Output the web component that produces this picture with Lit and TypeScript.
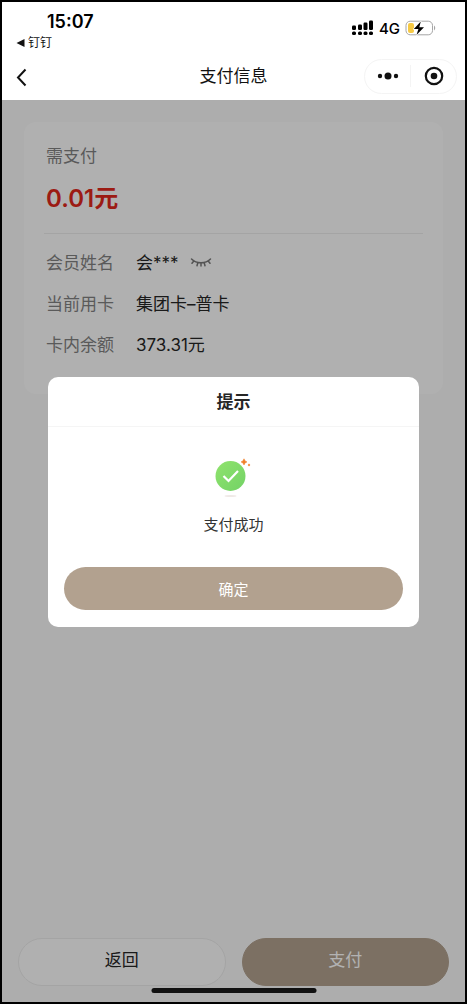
import { LitElement, html, css } from "lit";
import { customElement, property, state } from "lit/decorators.js";

const base = css`
  *,
  *::before,
  *::after {
    box-sizing: border-box;
  }
  button {
    margin: 0;
    padding: 0;
    border: 0;
    background: none;
    color: inherit;
    font: inherit;
    cursor: pointer;
  }
  svg {
    display: block;
  }
`;

@customElement("status-bar")
class StatusBar extends LitElement {
  static styles = [
    base,
    css`
      :host {
        display: flex;
        justify-content: space-between;
        height: 50px;
        padding: 8px 29px 0 14px;
      }
      .left {
        display: flex;
        flex-direction: column;
      }
      .time {
        padding-left: 31px;
        font-size: 18px;
        line-height: 24px;
        font-weight: 600;
      }
      .back {
        display: flex;
        align-items: center;
        gap: 3px;
        color: #111;
        font-size: 12px;
        line-height: 18px;
        text-decoration: none;
      }
      .right {
        display: flex;
        align-items: center;
        gap: 5px;
        height: 36px;
        font-size: 15px;
        font-weight: 500;
      }
    `,
  ];

  render() {
    return html`
      <div class="left">
        <div class="time">15:07</div>
        <a class="back" href="#">
          <svg width="9" height="8" viewBox="0 0 9 8"><path d="M8.5 0v8L.5 4z" fill="#111" /></svg>
          <span>钉钉</span>
        </a>
      </div>
      <div class="right">
        <svg width="23" height="16" viewBox="0 0 23 16" fill="#000">
          <rect x="1" y="5.5" width="4" height="4.5" rx="1.2" />
          <rect x="7" y="4.5" width="4" height="5.5" rx="1.2" />
          <rect x="12.5" y="2.5" width="4" height="7.5" rx="1.2" />
          <rect x="18" y=".5" width="4" height="9.5" rx="1.2" />
          <rect x="1" y="11.5" width="4" height="3.6" rx="1.5" />
          <rect x="7" y="11.5" width="4" height="3.6" rx="1.5" />
          <rect x="12.5" y="11.5" width="4" height="3.6" rx="1.5" />
          <rect x="18" y="11.5" width="4" height="3.6" rx="1.5" />
        </svg>
        <span>4G</span>
        <svg width="31" height="16" viewBox="0 0 31 16">
          <rect x="1" y="1.2" width="26.5" height="13.6" rx="4.2" fill="#fff" stroke="#a5a5a5" />
          <path d="M29 5.6c1.6.7 1.6 4.1 0 4.8z" fill="#a5a5a5" />
          <rect x="3" y="3" width="6" height="10" rx="2" fill="#f6c944" />
          <path
            d="M15.8 1.6 8.8 9h4.6l-1.9 6 7.5-7.8h-4.7z"
            fill="#000"
            stroke="#fff"
            stroke-width="1.4"
            paint-order="stroke"
            stroke-linejoin="round"
          />
        </svg>
      </div>
    `;
  }
}

@customElement("nav-bar")
class NavBar extends LitElement {
  @property() heading = "";

  static styles = [
    base,
    css`
      :host {
        display: grid;
        grid-template-columns: 1fr auto 1fr;
        align-items: center;
        height: 48px;
        padding: 0 8px;
      }
      .back {
        display: flex;
        align-items: center;
        width: 28px;
        height: 32px;
        padding: 2px 0 0 4px;
      }
      .title {
        margin: 0;
        font-size: 17px;
        line-height: 24px;
        font-weight: 400;
        color: #111;
      }
      .capsule {
        justify-self: end;
        display: flex;
        align-items: center;
        width: 93px;
        height: 35px;
        border: 1px solid #f4f4f4;
        border-radius: 18px;
      }
      .capsule button {
        flex: 1;
        display: flex;
        align-items: center;
        justify-content: center;
        height: 22px;
      }
      .capsule button + button {
        border-left: 1px solid #f4f4f4;
      }
    `,
  ];

  render() {
    return html`
      <button class="back" aria-label="返回上一页">
        <svg width="14" height="20" viewBox="0 0 14 20" fill="none">
          <path d="M11.5 2.500 4 10.500l7.500 8" stroke="#111" stroke-width="2" />
        </svg>
      </button>
      <h1 class="title">${this.heading}</h1>
      <div class="capsule">
        <button aria-label="更多">
          <svg width="22" height="10" viewBox="0 0 22 10" fill="#111">
            <circle cx="3" cy="5" r="2.2" />
            <circle cx="11" cy="5" r="3.5" />
            <circle cx="19" cy="5" r="2.2" />
          </svg>
        </button>
        <button aria-label="关闭">
          <svg width="20" height="20" viewBox="0 0 20 20" fill="none">
            <circle cx="10" cy="10" r="8.2" stroke="#111" stroke-width="2.2" />
            <circle cx="10" cy="10" r="3.3" fill="#111" />
          </svg>
        </button>
      </div>
    `;
  }
}

@customElement("payment-card")
class PaymentCard extends LitElement {
  static styles = [
    base,
    css`
      :host {
        display: block;
        padding: 22px 20px 29px;
        border-radius: 12px;
        background: #fdfdfd;
        font-size: 17px;
        line-height: 24px;
      }
      .label {
        color: #828282;
      }
      .due,
      .row {
        padding: 0 2px;
      }
      .amount {
        margin-top: 14px;
        font-size: 24px;
        line-height: 34px;
        font-weight: 600;
        color: #e0281c;
      }
      .details {
        margin: 17px 0 0;
        padding-top: 8px;
        border-top: 1px solid #ebebeb;
      }
      .row {
        display: flex;
        align-items: center;
        gap: 22px;
        height: 41px;
      }
      .value {
        display: flex;
        align-items: center;
        gap: 11px;
        margin: 0;
        color: #262626;
      }
    `,
  ];

  render() {
    return html`
      <div class="due">
        <div class="label">需支付</div>
        <div class="amount">0.01元</div>
      </div>
      <dl class="details">
        <div class="row">
          <dt class="label">会员姓名</dt>
          <dd class="value">
            <span>会***</span>
            <button aria-label="显示姓名">
              <svg width="22" height="12" viewBox="0 0 22 12" fill="none" stroke="#777" stroke-width="1.5" stroke-linecap="round">
                <path d="M1.500 2c5 5 14 5 19 0M3.800 4 2 6.300M7.800 5.700 7 8.700M11 6v3M14.200 5.700l.8 3M18.200 4 20 6.300" />
              </svg>
            </button>
          </dd>
        </div>
        <div class="row">
          <dt class="label">当前用卡</dt>
          <dd class="value">集团卡–普卡</dd>
        </div>
        <div class="row">
          <dt class="label">卡内余额</dt>
          <dd class="value">373.31元</dd>
        </div>
      </dl>
    `;
  }
}

@customElement("result-dialog")
class ResultDialog extends LitElement {
  static styles = [
    base,
    css`
      :host {
        display: block;
        width: 80%;
        border-radius: 10px;
        background: #fff;
        text-align: center;
      }
      .head {
        height: 50px;
        margin: 0;
        border-bottom: 1px solid #f5f5f5;
        font-size: 17px;
        line-height: 50px;
        font-weight: 700;
        color: #262626;
      }
      .body {
        display: flex;
        flex-direction: column;
        align-items: center;
        padding: 31px 16px 17px;
      }
      .message {
        margin: 15px 0 30px;
        font-size: 15px;
        line-height: 24px;
        color: #333;
      }
      .confirm {
        align-self: stretch;
        height: 43px;
        border-radius: 22px;
        background: #b2a18f;
        color: #fff;
        font-size: 15px;
      }
    `,
  ];

  private close() {
    this.dispatchEvent(new CustomEvent("confirm"));
  }

  render() {
    return html`
      <h2 class="head">提示</h2>
      <div class="body">
        <svg width="40" height="40" viewBox="0 0 40 40" fill="none">
          <defs>
            <linearGradient id="leaf" x1="0" y1="0" x2="1" y2="1">
              <stop offset="0" stop-color="#8fe36c" />
              <stop offset="1" stop-color="#73d266" />
            </linearGradient>
          </defs>
          <circle cx="17.5" cy="18" r="15" fill="url(#leaf)" />
          <path d="m10.500 18 5 5 9.500-10" stroke="#fff" stroke-width="2.2" />
          <path d="M31 .8q.6 2.600 3 3.100-2.400.5-3 3.100-.6-2.600-3-3.100 2.400-.5 3-3.100z" fill="#f07f28" stroke="#f07f28" stroke-width=".5" />
          <circle cx="36" cy="7" r="1.2" fill="#f39a58" />
          <ellipse cx="17.5" cy="38" rx="6" ry="1" fill="#efe9e6" />
        </svg>
        <p class="message">支付成功</p>
        <button class="confirm" @click=${this.close}>确定</button>
      </div>
    `;
  }
}

@customElement("app-root")
class AppRoot extends LitElement {
  @state() private open = true;

  static styles = [
    base,
    css`
      :host {
        position: relative;
        display: flex;
        flex-direction: column;
        box-sizing: border-box;
        min-height: 100vh;
        border: 2px solid #000;
        background: #fff;
        color: #000;
        font-family: Inter, "Noto Sans CJK SC", sans-serif;
      }
      .page {
        position: relative;
        flex: 1;
        display: flex;
        flex-direction: column;
        justify-content: space-between;
        background: #f8f8f8;
      }
      .content {
        padding: 22px;
      }
      .actions {
        display: flex;
        gap: 16px;
        padding: 16px;
      }
      .action {
        flex: 1;
        height: 48px;
        padding-bottom: 7px;
        border: 1px solid #ebebeb;
        border-radius: 24px;
        background: #fdfdfd;
        color: #262626;
        font-size: 17px;
      }
      .primary {
        border-color: #b2a18f;
        background: #b2a18f;
        color: #fff;
      }
      .mask {
        position: absolute;
        inset: 0;
        background: rgba(0, 0, 0, 0.3);
      }
      .layer {
        position: absolute;
        inset: 0;
        display: flex;
        align-items: center;
        justify-content: center;
      }
      .home {
        position: absolute;
        bottom: 9px;
        left: 50%;
        width: 165px;
        height: 5px;
        border-radius: 3px;
        background: #111;
        transform: translateX(-50%);
      }
    `,
  ];

  render() {
    return html`
      <status-bar></status-bar>
      <nav-bar heading="支付信息"></nav-bar>
      <main class="page">
        <div class="content"><payment-card></payment-card></div>
        <div class="actions">
          <button class="action">返回</button>
          <button class="action primary">支付</button>
        </div>
        ${this.open ? html`<div class="mask"></div>` : null}
      </main>
      ${this.open
        ? html`<div class="layer">
            <result-dialog role="dialog" aria-modal="true" @confirm=${() => (this.open = false)}></result-dialog>
          </div>`
        : null}
      <div class="home"></div>
    `;
  }
}
